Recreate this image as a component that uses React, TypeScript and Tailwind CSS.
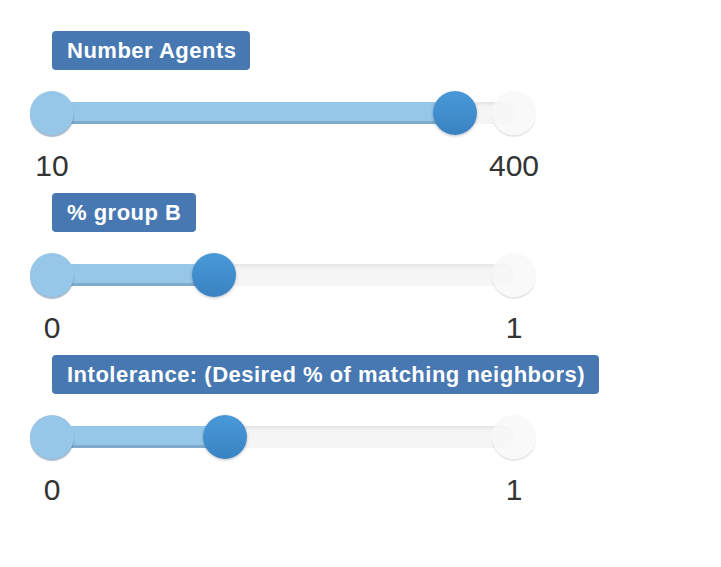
import React from "react";

interface SliderProps {
  label: string;
  min: number;
  max: number;
  value: number;
}

const TRACK = 462; // px between min and max knob centers

const Slider: React.FC<SliderProps> = ({ label, min, max, value }) => {
  const pos = ((value - min) / (max - min)) * TRACK;

  return (
    <div className="flex flex-col items-start">
      <div className="ml-[22px] flex h-[39px] items-center rounded-[4px] bg-[#4778b2] pl-[15px] pr-[14px] text-[22px] font-bold tracking-[0.5px] text-white">
        {label}
      </div>

      {/* slider body */}
      <div className="relative mt-[21px] h-[44px] w-[506px]">
        {/* grey rest of the track */}
        <div className="absolute left-[22px] top-[11px] h-[22px] w-[462px] rounded-r-[10px] bg-[#f5f5f5] shadow-[inset_0_3px_3px_rgba(0,0,0,0.06)]" />
        {/* filled part */}
        <div
          className="absolute left-[22px] top-[11px] h-[22px] bg-[#96c6e8] shadow-[inset_0_-3px_0_#7eaacb]"
          style={{ width: pos }}
        />
        {/* min knob */}
        <div className="absolute left-0 top-0 h-[44px] w-[44px] rounded-full bg-[#96c6e8] shadow-[0_2px_1px_rgba(60,100,140,0.45)]" />
        {/* max knob */}
        <div className="absolute right-0 top-0 h-[44px] w-[44px] rounded-full bg-[rgba(248,248,248,0.82)] shadow-[0_2px_1px_rgba(0,0,0,0.1)]" />
        {/* handle */}
        <div
          className="absolute top-0 h-[44px] w-[44px] rounded-full bg-gradient-to-b from-[#4999d9] to-[#3a82c1] shadow-[0_1px_3px_rgba(0,0,0,0.25)]"
          style={{ left: pos }}
        />
      </div>

      <div className="mt-[14px] flex w-[506px] justify-between text-[30px] leading-[34px] text-[#333]">
        <div className="flex w-[44px] justify-center whitespace-nowrap">{min}</div>
        <div className="flex w-[44px] justify-center whitespace-nowrap">{max}</div>
      </div>
    </div>
  );
};

export default function App() {
  return (
    <div
      className="flex h-[567px] w-[721px] flex-col gap-[10px] bg-white pl-[30px] pt-[31px]"
      style={{ fontFamily: '"Liberation Sans", Arial, sans-serif' }}
    >
      <Slider label="Number Agents" min={10} max={400} value={350} />
      <Slider label="% group B" min={0} max={1} value={0.35} />
      <Slider
        label="Intolerance: (Desired % of matching neighbors)"
        min={0}
        max={1}
        value={0.375}
      />
    </div>
  );
}
